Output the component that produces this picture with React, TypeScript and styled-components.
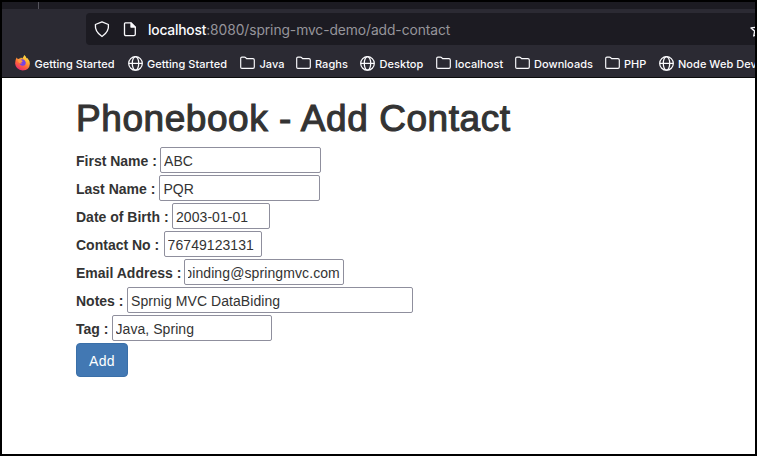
import React from "react";
import styled, { createGlobalStyle } from "styled-components";

const GlobalStyle = createGlobalStyle`
  *, *::before, *::after { box-sizing: border-box; }
  body { margin: 0; background: #000; overflow: hidden; }
`;

const Window = styled.div`
  width: 757px;
  height: 456px;
  border: 2px solid #000;
  background: #fff;
  display: flex;
  flex-direction: column;
  overflow: hidden;
`;

const TabStrip = styled.div`
  height: 7px;
  flex: none;
  background: #1c1b22;
  padding-left: 36px;
`;

const TabDivider = styled.div`
  width: 1px;
  height: 7px;
  background: #55545c;
`;

const NavBar = styled.div`
  height: 37px;
  flex: none;
  background: #2b2a33;
  padding: 4px 0 1px 84px;
`;

const AddressBar = styled.div`
  height: 32px;
  width: 680px;
  border-radius: 4px;
  background: #1c1b22;
  display: flex;
  align-items: center;
  padding-left: 8px;
`;

const ShieldIcon = styled.svg`
  width: 16px;
  height: 18px;
  flex: none;
`;

const PageIcon = styled.svg`
  width: 14px;
  height: 16px;
  flex: none;
  margin-left: 13px;
`;

const StarIcon = styled.svg`
  width: 16px;
  height: 16px;
  flex: none;
  margin-left: 299px;
  margin-top: 2px;
`;

const Url = styled.div`
  width: 303px;
  flex: none;
  margin-left: 11px;
  padding-top: 1px;
  font: 400 13.8px/20px Inter, sans-serif;
  letter-spacing: -0.07px;
  color: #96959b;
  white-space: nowrap;
`;

const Host = styled.span`
  color: #fbfbfe;
  font-weight: 500;
  letter-spacing: -0.2px;
`;

const Bookmarks = styled.div`
  height: 32px;
  flex: none;
  background: #2b2a33;
  border-bottom: 1px solid #0c0c0d;
  display: flex;
  align-items: center;
  padding: 3px 0 0 13px;
  overflow: hidden;
`;

const Bookmark = styled.div<{ $width: number }>`
  width: ${(p) => p.$width}px;
  flex: none;
  display: flex;
  align-items: center;
  gap: 4.5px;
  color: #fbfbfe;
  white-space: nowrap;
`;

const BookmarkIcon = styled.svg`
  width: 15px;
  height: 16px;
  flex: none;
`;

const BookmarkText = styled.span`
  padding-top: 1px;
  font: 500 11px/16px Inter, sans-serif;
  letter-spacing: 0.04px;
`;

const Page = styled.main`
  flex: 1;
  padding: 20px 0 0 74px;
  font: 14px/20px "Liberation Sans", Arial, sans-serif;
  color: #333;
`;

const Title = styled.h1`
  margin: 0 0 7px;
  font-size: 37px;
  line-height: 42px;
  font-weight: 500;
  letter-spacing: 0.56px;
  -webkit-text-stroke: 1.1px #333;
  white-space: nowrap;
`;

const Form = styled.form`
  display: flex;
  flex-direction: column;
  align-items: flex-start;
  gap: 2px;
`;

const Row = styled.div`
  display: flex;
  height: 26px;
  align-items: center;
`;

const Label = styled.label<{ $width: number }>`
  width: ${(p) => p.$width}px;
  flex: none;
  font-weight: 700;
  white-space: nowrap;
  padding-top: 1px;
`;

const Field = styled.div<{ $width: number }>`
  width: ${(p) => p.$width}px;
  height: 26px;
  border: 1px solid #8f8f9d;
  border-radius: 2px;
  padding: 1px 3px 0;
  background: #fff;
`;

const Value = styled.div<{ $end?: boolean }>`
  display: flex;
  justify-content: ${(p) => (p.$end ? "flex-end" : "flex-start")};
  overflow: hidden;
  line-height: 25px;
  height: 23px;
  letter-spacing: ${(p) => (p.$end ? 0.1 : 0.06)}px;
  white-space: nowrap;
`;

const AddButton = styled.button`
  width: 52px;
  height: 34px;
  padding: 2px 0 0;
  border: 1px solid #3a6fa8;
  border-radius: 4px;
  background: #4278b3;
  color: #fff;
  font: 14px/20px "Liberation Sans", Arial, sans-serif;
  letter-spacing: 0.3px;
`;

type IconKind = "firefox" | "globe" | "folder";

function Icon({ kind }: { kind: IconKind }) {
  if (kind === "folder") {
    return (
      <BookmarkIcon viewBox="0 0 15 16" fill="none" stroke="#fbfbfe" strokeWidth="1.15" strokeLinejoin="round">
        <path d="M.7 12.3V3.3Q.7 2.1 1.9 2.1H4.5Q5.1 2.1 5.5 2.5L6.6 3.6H12.9Q14.3 3.6 14.3 5V12.1Q14.3 13.4 13 13.4H1.9Q.7 13.4.7 12.3Z" />
      </BookmarkIcon>
    );
  }
  if (kind === "globe") {
    return (
      <BookmarkIcon viewBox="0 0 15 16" fill="none" stroke="#fbfbfe" strokeWidth="1.25">
        <circle cx="7.5" cy="8.4" r="6.8" />
        <ellipse cx="7.5" cy="8.4" rx="3.2" ry="6.8" />
        <path d="M.8 8.4H14.2" />
      </BookmarkIcon>
    );
  }
  return (
    <BookmarkIcon viewBox="0 0 15 16">
      <defs>
        <linearGradient id="flame" x1=".8" y1="0" x2=".25" y2="1">
          <stop offset="0" stopColor="#ffe84a" />
          <stop offset=".35" stopColor="#ffad32" />
          <stop offset=".65" stopColor="#ff613d" />
          <stop offset="1" stopColor="#e32576" />
        </linearGradient>
      </defs>
      <path fill="url(#flame)" d="M1.6 2.5 3 4.2Q4 3.4 5.2 3.5L6 2.4 7.3 3.4Q8.6 1.8 9.3.1 11 1.4 11.6 3.3L12.3 3Q15 5.8 14.9 8.7 14.5 15 7.6 15.4.8 15 .1 8.6 0 5.3 1.6 2.5Z" />
      <path fill="#7542e5" d="M5 5.4Q7.2 3.2 9.6 5.2 11.5 7 10.5 9.2 9 11.5 6.4 10.4 4.8 9.6 4.4 8.4 6 9 7.5 8 5.8 7.7 5 6.8Z" />
      <path fill="#ff9640" d="M3 4.2Q4.7 3.3 5.7 4.7L7.7 5.9Q7.4 7 6 7.2 5.6 8.2 4 8.1 2.7 6.5 3 4.2Z" />
    </BookmarkIcon>
  );
}

const bookmarks: { icon: IconKind; text: string; width: number }[] = [
  { icon: "firefox", text: "Getting Started", width: 112.5 },
  { icon: "globe", text: "Getting Started", width: 112.5 },
  { icon: "folder", text: "Java", width: 55.5 },
  { icon: "folder", text: "Raghs", width: 64.5 },
  { icon: "globe", text: "Desktop", width: 75.5 },
  { icon: "folder", text: "localhost", width: 79 },
  { icon: "folder", text: "Downloads", width: 90 },
  { icon: "folder", text: "PHP", width: 54 },
  { icon: "globe", text: "Node Web Dev", width: 97 },
];

const fields = [
  { label: "First Name :", labelWidth: 84, value: "ABC", width: 161 },
  { label: "Last Name :", labelWidth: 83.4, value: "PQR", width: 161 },
  { label: "Date of Birth :", labelWidth: 96, value: "2003-01-01", width: 98 },
  { label: "Contact No :", labelWidth: 87.6, value: "76749123131", width: 98 },
  { label: "Email Address :", labelWidth: 107.5, value: "binding@springmvc.com", width: 160.4, end: true },
  { label: "Notes :", labelWidth: 51, value: "Sprnig MVC DataBiding", width: 286 },
  { label: "Tag :", labelWidth: 35.5, value: "Java, Spring", width: 160 },
];

export default function App() {
  return (
    <>
      <GlobalStyle />
      <Window>
        <TabStrip>
          <TabDivider />
        </TabStrip>
        <NavBar>
          <AddressBar>
            <ShieldIcon viewBox="0 0 16 18" fill="none" stroke="#fbfbfe" strokeWidth="1.3" strokeLinejoin="round">
              <path d="M8 1.8 14.4 4.5Q15.3 11.7 8 16.5 .7 11.7 1.4 4.5Z" />
            </ShieldIcon>
            <PageIcon viewBox="0 0 14 16" fill="none" stroke="#fbfbfe" strokeWidth="1.3" strokeLinejoin="round">
              <path d="M2.4 1.9H8L12.3 6.1V13.2Q12.3 14.6 10.9 14.6H2.9Q1.5 14.6 1.5 13.2V3.1Q1.5 1.9 2.4 1.9Z" />
              <path d="M8 1.9V6.1H12.3Z" fill="#fbfbfe" />
            </PageIcon>
            <Url>
              <Host>localhost</Host>:8080/spring-mvc-demo/add-contact
            </Url>
            <StarIcon viewBox="0 0 16 16" fill="none" stroke="#fbfbfe" strokeWidth="1.3" strokeLinejoin="round">
              <path d="M8 1 10 5.3 15 5.9 11.3 9.2 12.3 14 8 11.6 3.7 14 4.7 9.2 1 5.9 6 5.3Z" />
            </StarIcon>
          </AddressBar>
        </NavBar>
        <Bookmarks>
          {bookmarks.map((b, i) => (
            <Bookmark key={i} $width={b.width}>
              <Icon kind={b.icon} />
              <BookmarkText>{b.text}</BookmarkText>
            </Bookmark>
          ))}
        </Bookmarks>
        <Page>
          <Title>Phonebook - Add Contact</Title>
          <Form>
            {fields.map((f) => (
              <Row key={f.label}>
                <Label $width={f.labelWidth}>{f.label}</Label>
                <Field $width={f.width}>
                  <Value $end={f.end}>{f.value}</Value>
                </Field>
              </Row>
            ))}
            <AddButton type="button">Add</AddButton>
          </Form>
        </Page>
      </Window>
    </>
  );
}
